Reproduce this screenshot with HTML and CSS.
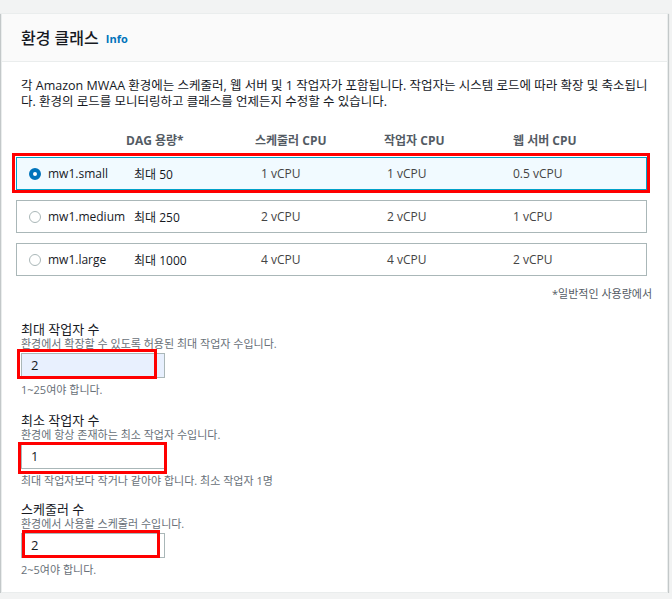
FILE: index.html
```html
<!DOCTYPE html>
<html lang="ko">
<head>
<meta charset="utf-8">
<link rel="stylesheet" href="styles.css">
</head>
<body>
<section class="card">
  <header class="card-head">
    <h2 class="title">환경 클래스</h2>
    <a class="info">Info</a>
  </header>
  <div class="card-body">
    <p class="desc">각 Amazon MWAA 환경에는 스케줄러, 웹 서버 및 1 작업자가 포함됩니다. 작업자는 시스템 로드에 따라 확장 및 축소됩니다. 환경의 로드를 모니터링하고 클래스를 언제든지 수정할 수 있습니다.</p>

    <div class="tbl-head">
      <span class="h-cap">DAG 용량*</span>
      <span class="h-col">스케줄러 CPU</span>
      <span class="h-col">작업자 CPU</span>
      <span class="h-col">웹 서버 CPU</span>
    </div>

    <div class="rows">
      <div class="row selected">
        <span class="radio on"></span>
        <span class="c-name">mw1.small</span>
        <span class="c-cap">최대 50</span>
        <span class="c-s">1 vCPU</span>
        <span class="c-w">1 vCPU</span>
        <span class="c-web">0.5 vCPU</span>
        <span class="mark mark-row"></span>
      </div>
      <div class="row">
        <span class="radio"></span>
        <span class="c-name">mw1.medium</span>
        <span class="c-cap">최대 250</span>
        <span class="c-s">2 vCPU</span>
        <span class="c-w">2 vCPU</span>
        <span class="c-web">1 vCPU</span>
      </div>
      <div class="row">
        <span class="radio"></span>
        <span class="c-name">mw1.large</span>
        <span class="c-cap">최대 1000</span>
        <span class="c-s">4 vCPU</span>
        <span class="c-w">4 vCPU</span>
        <span class="c-web">2 vCPU</span>
      </div>
    </div>

    <p class="foot">*일반적인 사용량에서</p>

    <div class="field f1">
      <label class="label">최대 작업자 수</label>
      <p class="fdesc">환경에서 확장할 수 있도록 허용된 최대 작업자 수입니다.</p>
      <div class="input-wrap">
        <div class="input filled">2</div>
        <span class="mark mark-in1"></span>
      </div>
      <p class="hint">1~25여야 합니다.</p>
    </div>

    <div class="field f2">
      <label class="label">최소 작업자 수</label>
      <p class="fdesc">환경에 항상 존재하는 최소 작업자 수입니다.</p>
      <div class="input-wrap">
        <div class="input">1</div>
        <span class="mark mark-in2"></span>
      </div>
      <p class="hint">최대 작업자보다 작거나 같아야 합니다. 최소 작업자 1명</p>
    </div>

    <div class="field f3">
      <label class="label">스케줄러 수</label>
      <p class="fdesc">환경에서 사용할 스케줄러 수입니다.</p>
      <div class="input-wrap">
        <div class="input">2</div>
        <span class="mark mark-in3"></span>
      </div>
      <p class="hint">2~5여야 합니다.</p>
    </div>
  </div>
</section>
</body>
</html>
```

FILE: styles.css
```css
* { box-sizing: border-box; }

body {
  margin: 0;
  background: #f2f3f3;
  font-family: "Open Sans", "Noto Sans CJK KR", sans-serif;
  color: #16191f;
}

.card {
  margin: 13px 4px 0 1px;
  width: 667px;
  height: 580px;
  background: #fff;
  border: 1px solid #eaeded;
  box-shadow: 0 1px 1px 0 rgba(0, 28, 36, 0.3), 1px 1px 1px 0 rgba(0, 28, 36, 0.15), -1px 1px 1px 0 rgba(0, 28, 36, 0.15);
}

.card-head {
  height: 48px;
  background: #fafafa;
  border-bottom: 1px solid #eaeded;
  display: flex;
  align-items: center;
  gap: 7px;
  padding: 0 19px;
}

.title {
  margin: 0;
  font-size: 16px;
  font-weight: 500;
  line-height: 20px;
}

.info {
  font-size: 11px;
  font-weight: 700;
  color: #0073bb;
  line-height: 20px;
  padding-top: 2px;
}

.card-body {
  padding: 16px 19px 0 19px;
}

.desc {
  margin: 0;
  font-size: 12.5px;
  line-height: 16px;
}

.tbl-head {
  display: flex;
  margin-top: 23px;
  font-size: 12px;
  font-weight: 700;
  color: #545b64;
  line-height: 16px;
  padding-left: 105px;
}
.h-cap { width: 129px; }
.h-col { width: 129px; }

.rows {
  margin-top: 8px;
  display: flex;
  flex-direction: column;
  gap: 10px;
  margin-left: -5px;
  width: 631px;
}

.row {
  position: relative;
  height: 33px;
  border: 1px solid #aab7b8;
  display: flex;
  align-items: center;
  font-size: 12px;
  color: #16191f;
}
.row.selected {
  background: #f1faff;
  border-color: #00a1c9;
}

.radio {
  width: 12px;
  height: 12px;
  border-radius: 50%;
  border: 1px solid #aab7b8;
  background: #fff;
  margin-left: 12px;
  margin-right: 7px;
}
.radio.on {
  border: 4px solid #0073bb;
}

.c-name { width: 86px; }
.c-cap { width: 127px; }
.c-s { width: 126px; color: #444; }
.c-w { width: 126px; color: #444; }
.c-web { color: #444; }

.foot {
  margin: 11px -4px 0 0;
  text-align: right;
  font-size: 11px;
  line-height: 14px;
  color: #545b64;
}

.field { display: flex; flex-direction: column; }
.f1 { margin-top: 20px; }
.f2 { margin-top: 16px; }
.f3 { margin-top: 14px; }

.label {
  font-size: 13px;
  line-height: 16px;
}
.fdesc, .hint {
  margin: 0;
  font-size: 11px;
  line-height: 13px;
  color: #687078;
}
.input-wrap {
  position: relative;
  margin-top: 3px;
  width: 144px;
}
.input {
  height: 25px;
  border: 1px solid #aab7b8;
  background: #fff;
  font-size: 13px;
  line-height: 23px;
  padding-left: 9px;
}
.input.filled { background: #e8f0fe; }
.hint { margin-top: 5px; }

.mark {
  position: absolute;
  border: 3px solid #ff0000;
  pointer-events: none;
}
.mark-row { left: -5px; top: -5px; right: -4px; bottom: -4px; }
.mark-in1 { left: -4px; top: -4px; width: 140px; height: 30px; }
.mark-in2 { left: -3px; top: -2px; width: 149px; height: 32px; }
.mark-in3 { left: 1px; top: -3px; width: 138px; height: 28px; }
```
